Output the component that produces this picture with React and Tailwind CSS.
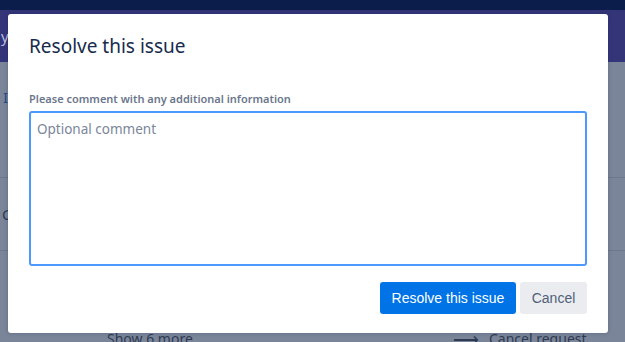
import { useState } from "react";

export default function App() {
  const [comment, setComment] = useState("");

  return (
    <div className="relative h-[342px] w-[625px] overflow-hidden bg-[#7a8599] font-['Noto_Sans',sans-serif]">
      {/* Page behind the dimmed overlay */}
      <div className="flex h-[10px] bg-[#0b1d4b]"></div>
      <div className="flex h-[52px] items-center bg-[#343579] pl-[1px] text-[15px] text-[#b8bde0]">
        y
      </div>
      <div className="flex flex-col text-[#2e3a52]">
        <div className="flex h-[70px] items-center pl-[3px] text-[15px] text-[#2a4a8a]">I</div>
        <div className="h-[46px] border-b border-[#6d788b]"></div>
        <div className="flex h-[72px] items-center pl-[2px] text-[15px]">C</div>
        <div className="h-[17px] border-t border-[#6d788b]"></div>
      </div>
      <div className="absolute bottom-[-7px] left-[107px] text-[14px] text-[#2e3a52]">Show 6 more</div>
      <div className="absolute bottom-[-7px] left-[453px] flex items-center gap-[10px] text-[14px] text-[#2e3a52]">
        <span className="text-[18px] leading-none">⟶</span>
        <span>Cancel request</span>
      </div>

      {/* Modal */}
      <div className="absolute left-[8px] top-[14px] flex h-[319px] w-[600px] flex-col rounded-[3px] bg-white px-[21px] shadow-[0_0_4px_rgba(9,30,66,0.25)]">
        <h2 className="mt-[20px] text-[19px] leading-[24px] text-[#172b4d]">Resolve this issue</h2>

        <label className="mt-[33px] text-[11px] font-semibold leading-[16px] text-[#6b778c]">
          Please comment with any additional information
        </label>
        <textarea
          autoFocus
          value={comment}
          onChange={(e) => setComment(e.target.value)}
          placeholder="Optional comment"
          className="mt-[4px] h-[155px] w-full resize-none rounded-[3px] border-2 border-[#4c9aff] px-[6px] py-[6px] text-[13.5px] leading-[20px] text-[#172b4d] caret-[#172b4d] outline-none placeholder:text-[#7a869a]"
        ></textarea>

        <div className="mt-[16px] flex justify-end gap-[4px] font-['Liberation_Sans',sans-serif] text-[14px]">
          <button className="h-[32px] w-[136px] rounded-[3px] bg-[#0073e6] text-white">
            Resolve this issue
          </button>
          <button className="h-[32px] w-[67px] rounded-[3px] bg-[#ebecf0] text-[#505f79]">
            Cancel
          </button>
        </div>
      </div>
    </div>
  );
}
